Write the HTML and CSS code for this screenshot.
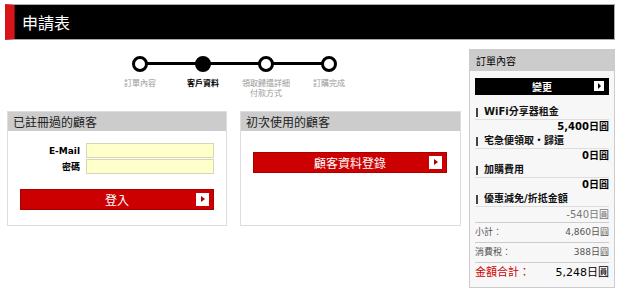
FILE: index.html
```html
<html>
<head>
<meta charset="UTF-8">
<title>申請表</title>
<link rel="stylesheet" href="styles.css">
</head>
<body>
<div class="page">
    <div class="title-bar"><h1>申請表</h1></div>

    <div class="content">
        <div class="main">
            <div class="steps">
                <div class="track"></div>
                <div class="step"><span class="dot"></span><span class="label">訂單內容</span></div>
                <div class="step active"><span class="dot"></span><span class="label">客戶資料</span></div>
                <div class="step"><span class="dot"></span><span class="label">領取歸還詳細<br>付款方式</span></div>
                <div class="step"><span class="dot"></span><span class="label">訂購完成</span></div>
            </div>

            <div class="panels">
                <div class="panel">
                    <div class="panel-head">已註冊過的顧客</div>
                    <div class="panel-body">
                        <div class="field">
                            <label for="email">E-Mail</label>
                            <input type="text" id="email">
                        </div>
                        <div class="field">
                            <label for="pw">密碼</label>
                            <input type="password" id="pw">
                        </div>
                        <button class="red-btn login">登入<span class="arrow"></span></button>
                    </div>
                </div>
                <div class="panel">
                    <div class="panel-head">初次使用的顧客</div>
                    <div class="panel-body">
                        <button class="red-btn register">顧客資料登錄<span class="arrow"></span></button>
                    </div>
                </div>
            </div>
        </div>

        <div class="sidebar">
            <div class="side-head">訂單內容</div>
            <div class="side-body">
                <button class="black-btn">變更<span class="arrow"></span></button>
                <div class="item">
                    <div class="item-name">WiFi分享器租金</div>
                    <div class="item-price">5,400日圓</div>
                </div>
                <div class="item">
                    <div class="item-name">宅急便領取・歸還</div>
                    <div class="item-price">0日圓</div>
                </div>
                <div class="item">
                    <div class="item-name">加購費用</div>
                    <div class="item-price">0日圓</div>
                </div>
                <div class="item">
                    <div class="item-name">優惠減免/折抵金額</div>
                    <div class="item-price light">-540日圓</div>
                </div>
                <div class="sum"><span>小計：</span><span>4,860日圓</span></div>
                <div class="sum"><span>消費稅：</span><span>388日圓</span></div>
                <div class="sum total"><span>金額合計：</span><span>5,248日圓</span></div>
            </div>
        </div>
    </div>
</div>
</body>
</html>
```

FILE: styles.css
```css
body {
    margin: 0;
    padding: 0;
    background-color: #fff;
    font-family: Tahoma, "DejaVu Sans", "Noto Sans CJK TC", sans-serif;
    color: #000;
}
.page {
    padding: 4px 5px 0 5px;
}
.title-bar {
    height: 34px;
    border: 1px solid #aaa;
    background-color: #000;
    border-left: 9px solid #d8141b;
    box-shadow: inset 1px 0 0 #8b0d10;
}
.title-bar h1 {
    margin: 0;
    padding-left: 8px;
    line-height: 34px;
    font-size: 16px;
    font-weight: normal;
    color: #fff;
    font-family: "Noto Sans CJK TC", sans-serif;
}
.content {
    display: flex;
    margin-top: 9px;
}
.main {
    width: 455px;
    padding-left: 2px;
}
.steps {
    position: relative;
    display: flex;
    justify-content: center;
    height: 62px;
}
.track {
    position: absolute;
    top: 13px;
    left: 136px;
    width: 189px;
    height: 3px;
    background: #000;
}
.step {
    position: relative;
    width: 63px;
    display: flex;
    flex-direction: column;
    align-items: center;
    padding-top: 7px;
}
.dot {
    width: 10px;
    height: 10px;
    border: 3px solid #000;
    border-radius: 50%;
    background: #fff;
}
.step.active .dot {
    background: #000;
}
.label {
    margin-top: 6px;
    font-size: 8px;
    line-height: 10px;
    color: #999;
    text-align: center;
    font-family: "Noto Sans CJK TC", sans-serif;
}
.step.active .label {
    color: #000;
    font-weight: bold;
}
.panels {
    display: flex;
    gap: 13px;
}
.panel {
    width: 218px;
    height: 113px;
    border: 1px solid #ddd;
    background: #fff;
}
.panel + .panel {
    width: 219px;
}
.panel-head {
    height: 19px;
    line-height: 19px;
    background: #ccc;
    padding-left: 5px;
    font-size: 12px;
    font-family: "Noto Sans CJK TC", sans-serif;
    color: #222;
}
.panel-body {
    padding: 12px 12px 0 12px;
}
.field {
    display: flex;
    align-items: center;
    margin-bottom: 1px;
}
.field label {
    width: 61px;
    text-align: right;
    font-size: 9px;
    font-weight: bold;
    padding-right: 6px;
}
.field input {
    width: 128px;
    height: 15px;
    margin: 0;
    padding: 0 3px;
    border: 1px solid #d6d6b0;
    background: #ffffcc;
    box-sizing: border-box;
}
.red-btn {
    position: relative;
    display: block;
    width: 194px;
    height: 21px;
    margin: 15px 0 0 0;
    border: 1px solid #a00;
    background: #cc0000;
    color: #fff;
    font-size: 12px;
    font-family: "Noto Sans CJK TC", sans-serif;
    padding: 0;
}
.register {
    margin: 9px 0 0 0;
}
.arrow {
    position: absolute;
    right: 4px;
    top: 3px;
    width: 13px;
    height: 13px;
    background: #fff;
}
.arrow::after {
    content: "";
    position: absolute;
    left: 5px;
    top: 3px;
    border-left: 4px solid #a00;
    border-top: 3.5px solid transparent;
    border-bottom: 3.5px solid transparent;
}
.sidebar {
    width: 144px;
    margin-left: 7px;
    border: 1px solid #ccc;
    background: #f7f7f7;
    height: 237px;
}
.side-head {
    height: 21px;
    line-height: 21px;
    background: #ccc;
    padding-left: 6px;
    font-size: 10px;
    font-family: "Noto Sans CJK TC", sans-serif;
}
.side-body {
    padding: 7px 5px 0 5px;
}
.black-btn {
    position: relative;
    display: block;
    width: 134px;
    height: 17px;
    margin: 0 0 10px 0;
    padding: 0;
    border: none;
    background: #000;
    color: #fff;
    font-size: 10px;
    font-weight: bold;
    font-family: "Noto Sans CJK TC", sans-serif;
}
.black-btn .arrow {
    right: 5px;
    top: 3px;
    width: 10px;
    height: 10px;
}
.black-btn .arrow::after {
    left: 4px;
    top: 2px;
    border-left: 3px solid #000;
    border-top: 3px solid transparent;
    border-bottom: 3px solid transparent;
}
.item-name {
    position: relative;
    font-size: 10px;
    font-weight: bold;
    height: 14px;
    line-height: 14px;
    padding-left: 9px;
    border-bottom: 1px solid #ddd;
    color: #111;
}
.item-name::before {
    content: "";
    position: absolute;
    left: 1px;
    top: 3px;
    width: 2px;
    height: 9px;
    background: #444;
}
.item-price {
    text-align: right;
    font-size: 10px;
    font-weight: bold;
    line-height: 14px;
    height: 14px;
}
.item-price.light {
    font-weight: normal;
    color: #777;
    border-bottom: 1px solid #ccc;
    height: 15px;
    line-height: 15px;
}
.sum {
    display: flex;
    justify-content: space-between;
    font-size: 9px;
    color: #555;
    height: 19px;
    line-height: 19px;
    border-bottom: 1px solid #ccc;
}
.sum.total {
    border-bottom: none;
    color: #000;
    font-size: 11px;
    line-height: 20px;
}
.sum.total span:first-child {
    color: #c00;
}
```
